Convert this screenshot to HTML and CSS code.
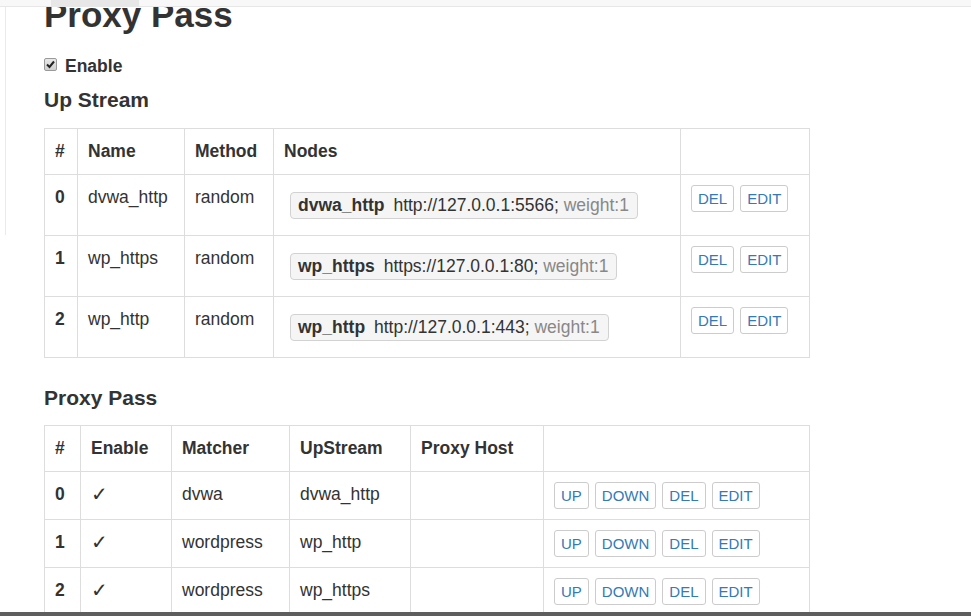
FILE: index.html
```html
<!DOCTYPE html>
<html>
<head>
<meta charset="utf-8">
<title>Proxy Pass</title>
<link rel="stylesheet" href="styles.css">
</head>
<body>
<div class="navbar"><span class="nav-active"></span></div>
<div class="layout">
  <div class="aside"></div>
  <div class="content">
    <h1 class="title">Proxy Pass</h1>
    <div class="check-row">
      <span class="checkbox"><svg width="11" height="11" viewBox="0 0 11 11"><path d="M2 5.5 L4.5 8 L9 2.5" fill="none" stroke="#222" stroke-width="2"/></svg></span>
      <span class="check-label">Enable</span>
    </div>
    <h4 class="section first">Up Stream</h4>
    <table class="tbl">
      <colgroup>
        <col style="width:33px"><col style="width:107px"><col style="width:89px"><col style="width:407px"><col style="width:129px">
      </colgroup>
      <thead>
        <tr><th>#</th><th>Name</th><th>Method</th><th>Nodes</th><th></th></tr>
      </thead>
      <tbody>
        <tr>
          <th class="num">0</th><td>dvwa_http</td><td>random</td>
          <td><span class="node"><b class="node-name">dvwa_http</b> http://127.0.0.1:5566; <span class="weight">weight:1</span></span></td>
          <td><div class="btns"><button class="btn">DEL</button><button class="btn">EDIT</button></div></td>
        </tr>
        <tr>
          <th class="num">1</th><td>wp_https</td><td>random</td>
          <td><span class="node"><b class="node-name">wp_https</b> https://127.0.0.1:80; <span class="weight">weight:1</span></span></td>
          <td><div class="btns"><button class="btn">DEL</button><button class="btn">EDIT</button></div></td>
        </tr>
        <tr>
          <th class="num">2</th><td>wp_http</td><td>random</td>
          <td><span class="node"><b class="node-name">wp_http</b> http://127.0.0.1:443; <span class="weight">weight:1</span></span></td>
          <td><div class="btns"><button class="btn">DEL</button><button class="btn">EDIT</button></div></td>
        </tr>
      </tbody>
    </table>
    <h4 class="section second">Proxy Pass</h4>
    <table class="tbl">
      <colgroup>
        <col style="width:36px"><col style="width:91px"><col style="width:118px"><col style="width:121px"><col style="width:133px"><col style="width:266px">
      </colgroup>
      <thead>
        <tr><th>#</th><th>Enable</th><th>Matcher</th><th>UpStream</th><th>Proxy Host</th><th></th></tr>
      </thead>
      <tbody>
        <tr>
          <th class="num">0</th><td class="tick">✓</td><td>dvwa</td><td>dvwa_http</td><td></td>
          <td><div class="btns"><button class="btn">UP</button><button class="btn">DOWN</button><button class="btn">DEL</button><button class="btn">EDIT</button></div></td>
        </tr>
        <tr>
          <th class="num">1</th><td class="tick">✓</td><td>wordpress</td><td>wp_http</td><td></td>
          <td><div class="btns"><button class="btn">UP</button><button class="btn">DOWN</button><button class="btn">DEL</button><button class="btn">EDIT</button></div></td>
        </tr>
        <tr>
          <th class="num">2</th><td class="tick">✓</td><td>wordpress</td><td>wp_https</td><td></td>
          <td><div class="btns"><button class="btn">UP</button><button class="btn">DOWN</button><button class="btn">DEL</button><button class="btn">EDIT</button></div></td>
        </tr>
      </tbody>
    </table>
  </div>
</div>
<div class="bottom-bar"></div>
</body>
</html>
```
FILE: styles.css
```css
html, body {
  margin: 0;
  padding: 0;
  background: #fff;
}
body {
  font-family: "Liberation Sans", Arial, Helvetica, sans-serif;
  font-size: 17.5px;
  line-height: 25px;
  color: #333;
  overflow: hidden;
  height: 616px;
}
.navbar {
  position: fixed;
  top: 0;
  left: 0;
  right: 0;
  height: 6px;
  background: #f8f8f8;
  border-bottom: 1px solid #e7e7e7;
  z-index: 10;
}
.nav-active {
  position: absolute;
  left: 51px;
  top: 0;
  width: 88px;
  height: 6px;
  background: #e7e7e7;
}
.bottom-bar {
  position: fixed;
  left: 0;
  right: 0;
  bottom: 0;
  height: 4px;
  background: #5e5e5e;
  z-index: 10;
}
.layout {
  display: flex;
  align-items: flex-start;
}
.aside {
  flex: none;
  width: 6px;
  height: 235px;
  box-sizing: border-box;
  border-right: 1px solid #eaeaea;
}
.content {
  margin-left: 38px;
}
.title {
  font-size: 35px;
  line-height: 38px;
  font-weight: bold;
  margin: -4px 0 0;
}
.check-row {
  display: flex;
  align-items: center;
  margin-top: 20px;
  height: 25px;
}
.checkbox {
  width: 13px;
  height: 13px;
  box-sizing: border-box;
  border: 1px solid #9a9a9a;
  border-radius: 2px;
  background: linear-gradient(#e8e8e8, #cfcfcf);
  display: flex;
  align-items: center;
  justify-content: center;
  margin-right: 8px;
  margin-top: -4px;
}
.checkbox svg { display: block; }
.check-label {
  font-weight: bold;
}
.section {
  font-size: 21px;
  line-height: 25px;
  font-weight: bold;
  margin: 0;
}
.section.first {
  margin-top: 7.5px;
  margin-bottom: 16.5px;
}
.section.second {
  margin-top: 27px;
  margin-bottom: 15px;
}
.tbl {
  border-collapse: collapse;
  table-layout: fixed;
  width: 765px;
  border: 1px solid #ddd;
}
.tbl th, .tbl td {
  border: 1px solid #ddd;
  padding: 10px;
  text-align: left;
  vertical-align: top;
  font-weight: normal;
  white-space: nowrap;
}
.tbl thead th {
  font-weight: bold;
}
.tbl th.num {
  font-weight: bold;
}
.node {
  display: block;
  width: max-content;
  margin: 7px 7px 6px 6px;
  padding: 0 8px 0 7px;
  background: #f5f5f5;
  border: 1px solid #d2d2d2;
  border-radius: 4px;
  line-height: 25px;
}
.node-name {
  font-weight: bold;
  margin-right: 4px;
}
.weight {
  color: #888;
}
.btns {
  display: flex;
  gap: 6px;
}
.btn {
  font-family: "Liberation Sans", Arial, Helvetica, sans-serif;
  font-size: 15px;
  line-height: 25px;
  height: 27px;
  padding: 0 6px;
  color: #337ab7;
  background: #fff;
  border: 1px solid #ccc;
  border-radius: 3px;
  margin: 0;
}
.tick {
  font-family: "DejaVu Sans", sans-serif;
  font-size: 20px;
  font-weight: 200;
}
```
